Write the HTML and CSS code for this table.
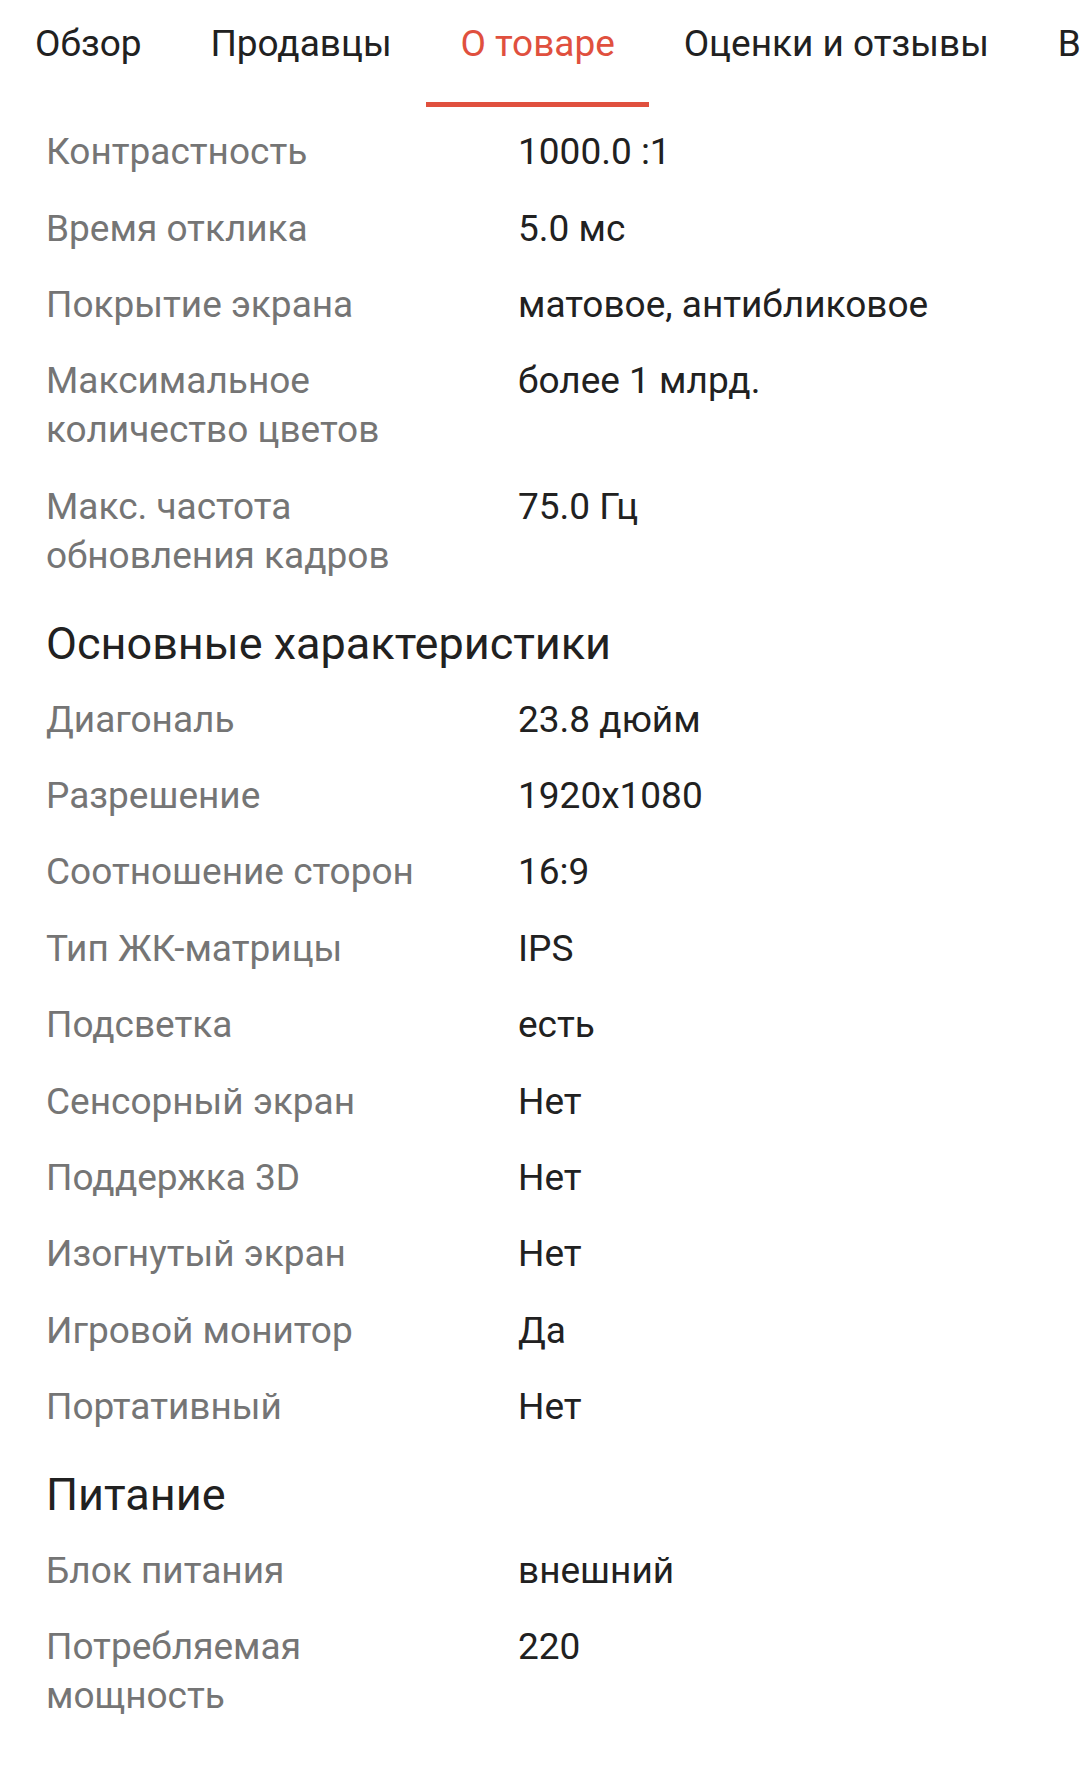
FILE: index.html
```html
<!DOCTYPE html>
<html lang="ru">
<head>
<meta charset="utf-8">
<link rel="stylesheet" href="styles.css">
</head>
<body>
<nav class="tabs">
  <div class="tab">Обзор</div>
  <div class="tab">Продавцы</div>
  <div class="tab active">О товаре</div>
  <div class="tab">Оценки и отзывы</div>
  <div class="tab">Вопросы</div>
</nav>
<main class="specs">
  <div class="row"><div class="label">Контрастность</div><div class="value">1000.0 :1</div></div>
  <div class="row"><div class="label">Время отклика</div><div class="value">5.0 мс</div></div>
  <div class="row"><div class="label">Покрытие экрана</div><div class="value">матовое, антибликовое</div></div>
  <div class="row"><div class="label">Максимальное количество цветов</div><div class="value">более 1 млрд.</div></div>
  <div class="row"><div class="label">Макс. частота обновления кадров</div><div class="value">75.0 Гц</div></div>
  <h2 class="section">Основные характеристики</h2>
  <div class="row"><div class="label">Диагональ</div><div class="value">23.8 дюйм</div></div>
  <div class="row"><div class="label">Разрешение</div><div class="value">1920x1080</div></div>
  <div class="row"><div class="label">Соотношение сторон</div><div class="value">16:9</div></div>
  <div class="row"><div class="label">Тип ЖК-матрицы</div><div class="value">IPS</div></div>
  <div class="row"><div class="label">Подсветка</div><div class="value">есть</div></div>
  <div class="row"><div class="label">Сенсорный экран</div><div class="value">Нет</div></div>
  <div class="row"><div class="label">Поддержка 3D</div><div class="value">Нет</div></div>
  <div class="row"><div class="label">Изогнутый экран</div><div class="value">Нет</div></div>
  <div class="row"><div class="label">Игровой монитор</div><div class="value">Да</div></div>
  <div class="row"><div class="label">Портативный</div><div class="value">Нет</div></div>
  <h2 class="section">Питание</h2>
  <div class="row"><div class="label">Блок питания</div><div class="value">внешний</div></div>
  <div class="row"><div class="label">Потребляемая мощность</div><div class="value">220</div></div>
</main>
</body>
</html>
```
FILE: styles.css
```css
html, body {
  margin: 0;
  padding: 0;
  background: #ffffff;
}
body {
  font-family: Roboto, "Noto Sans", sans-serif;
  color: #212121;
  width: 1080px;
  height: 1778px;
  overflow: hidden;
}
.tabs {
  display: flex;
  height: 107px;
  white-space: nowrap;
  overflow: hidden;
}
.tab {
  flex: none;
  padding: 0 34.4px;
  font-size: 37px;
  line-height: 88px;
  color: #212121;
  box-sizing: border-box;
  height: 107px;
}
.tab:first-child {
  padding-left: 35px;
}
.tab.active {
  color: #e0503e;
  border-bottom: 5px solid #e0503e;
}
.specs {
  padding: 6.5px 0 0 46px;
}
.row {
  display: flex;
  padding: 13.7px 0;
  font-size: 37px;
  line-height: 49px;
}
.label {
  width: 472px;
  flex: none;
  color: #757575;
  padding-right: 40px;
  box-sizing: border-box;
}
.value {
  color: #212121;
}
.section {
  margin: 0;
  padding: 24.3px 0 11.3px;
  font-size: 45px;
  line-height: 52px;
  font-weight: 400;
  color: #212121;
}
```
